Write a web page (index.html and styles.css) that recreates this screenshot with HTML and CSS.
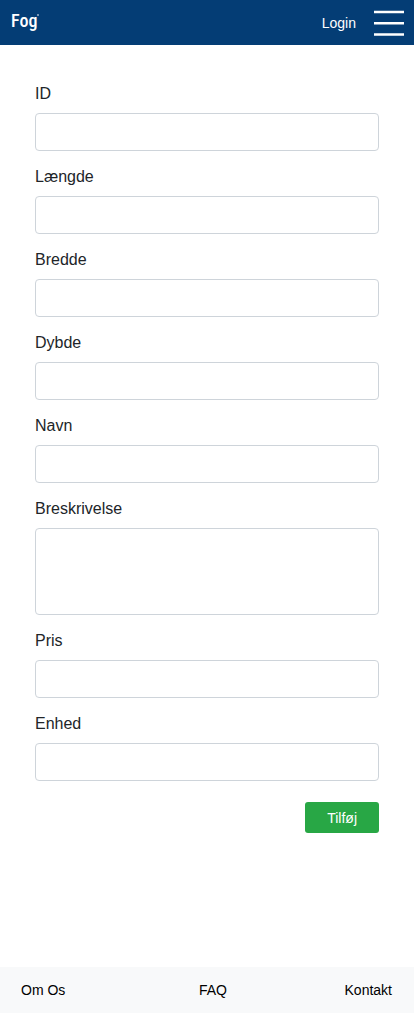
FILE: index.html
```html
<!DOCTYPE html>
<html lang="da">
<head>
<meta charset="utf-8">
<meta name="viewport" content="width=device-width, initial-scale=1">
<title>Fog</title>
<link rel="stylesheet" href="styles.css">
</head>
<body>
<header class="header">
  <a class="logo" href="#">Fog<span class="logo-mark"></span></a>
  <a class="login" href="#">Login</a>
  <button class="menu" type="button" aria-label="Menu">
    <svg width="30" height="26" viewBox="0 0 30 26" aria-hidden="true"><path d="M0 2H30M0 13.2H30M0 24.5H30" stroke="#fff" stroke-width="2.4"/></svg>
  </button>
</header>
<main class="main">
  <form class="form">
    <div class="field"><label for="id">ID</label><input class="control" id="id" type="text"></div>
    <div class="field"><label for="length">Længde</label><input class="control" id="length" type="text"></div>
    <div class="field"><label for="width">Bredde</label><input class="control" id="width" type="text"></div>
    <div class="field"><label for="depth">Dybde</label><input class="control" id="depth" type="text"></div>
    <div class="field"><label for="name">Navn</label><input class="control" id="name" type="text"></div>
    <div class="field"><label for="description">Breskrivelse</label><textarea class="control area" id="description"></textarea></div>
    <div class="field"><label for="price">Pris</label><input class="control" id="price" type="text"></div>
    <div class="field"><label for="unit">Enhed</label><input class="control" id="unit" type="text"></div>
    <button class="submit" type="submit">Tilføj</button>
  </form>
</main>
<footer class="footer">
  <a href="#">Om Os</a>
  <a href="#">FAQ</a>
  <a href="#">Kontakt</a>
</footer>
</body>
</html>
```
FILE: styles.css
```css
* { box-sizing: border-box; }

body {
  display: flex;
  flex-direction: column;
  min-height: 100vh;
  margin: 0;
  background: #fff;
  color: #212529;
  font-family: "Liberation Sans", Arial, sans-serif;
  font-size: 16px;
  line-height: 24px;
}

a { color: inherit; text-decoration: none; }

.header {
  display: flex;
  align-items: center;
  height: 45px;
  padding: 0 10px 0 11px;
  background: #043d75;
  color: #fff;
}

.logo {
  display: flex;
  align-items: flex-start;
  margin-right: auto;
  padding-bottom: 3px;
  font-family: "Roboto Condensed", "Liberation Sans Narrow", "Open Sans Condensed", sans-serif;
  font-size: 18px;
  font-weight: 500;
}

.logo-mark {
  width: 2px;
  height: 2px;
  margin-top: 5px;
  border-radius: 50%;
  background: #9db5cc;
}

.login { margin-right: 18px; font-size: 14px; }

.menu {
  display: flex;
  padding: 0;
  border: 0;
  background: none;
}

.main { flex: 1; padding: 37px 35px; }

.form { display: flex; flex-direction: column; gap: 14px; }

.field { display: flex; flex-direction: column; gap: 7px; }

.control {
  width: 100%;
  height: 38px;
  padding: 6px 12px;
  border: 1px solid #ced4da;
  border-radius: 4px;
  background: #fff;
  color: #495057;
  font: inherit;
}

.area { height: 87px; resize: none; }

.submit {
  align-self: flex-end;
  height: 31px;
  margin-top: 7px;
  padding: 0 22px;
  border: 0;
  border-radius: 3px;
  background: #28a745;
  color: #fff;
  font: inherit;
  font-size: 14px;
}

.footer {
  display: grid;
  grid-template-columns: 11fr 9fr auto;
  align-items: center;
  height: 46px;
  padding: 0 22px 0 21px;
  background: #f8f9fa;
  color: #000;
  font-size: 14px;
}
```
